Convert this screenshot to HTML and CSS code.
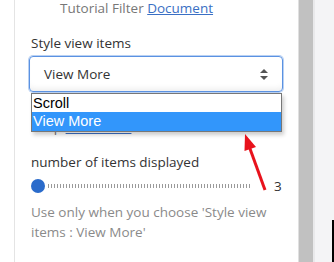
FILE: index.html
```html
<!DOCTYPE html>
<html lang="en">
<head>
  <meta charset="UTF-8" />
  <title>Settings</title>
  <link rel="stylesheet" href="styles.css">
</head>
<body>
  <div class="page">
    <div class="panel">
      <p class="tutorial">Tutorial Filter <a href="#">Document</a></p>

      <label class="label">Style view items</label>
      <div class="select-wrap">
        <div class="select">
          <span>View More</span>
          <svg class="caret" width="8" height="11" viewBox="0 0 8 11">
            <path d="M4 0 L8 4 L0 4 Z M0 7 L8 7 L4 11 Z" fill="#555"/>
          </svg>
        </div>
        <!-- open option list -->
        <ul class="options">
          <li>Scroll</li>
          <li class="active">View More</li>
        </ul>
      </div>

      <p class="shop">shop <a href="#">Document</a></p>

      <label class="label items-label">number of items displayed</label>
      <div class="slider">
        <span class="thumb"></span>
        <span class="track"></span>
        <span class="value">3</span>
      </div>
      <p class="help">Use only when you choose 'Style view items : View More'</p>
    </div>
    <div class="scroll"></div>
    <div class="side"></div>

    <svg class="arrow" width="334" height="262" viewBox="0 0 334 262">
      <line x1="265" y1="190" x2="249" y2="146" stroke="#e8121c" stroke-width="3"/>
      <polygon points="245,134 256,147 244.5,151" fill="#e8121c"/>
    </svg>
  </div>
</body>
</html>
```

FILE: styles.css
```css
* { margin: 0; padding: 0; box-sizing: border-box; }
body {
  background: #fff;
  font-family: "Open Sans", sans-serif;
  font-size: 13.5px;
  color: #333;
}
.page {
  position: relative;
  display: flex;
  height: 262px;
  width: 334px;
  overflow: hidden;
}
.panel {
  margin-left: 14px;
  width: 285px;
  border-left: 1px solid #e4e4e4;
  border-right: 1px solid #e0e0e0;
  padding-left: 16px;
}
.scroll {
  width: 14px;
  background: #c1c1c1;
}
.side {
  flex: 1;
  background: #f4f4f6;
  border-left: 2px solid #e9e9eb;
  border-right: 2px solid #f4f4f6;
  position: relative;
}
.side::after {
  content: "";
  position: absolute;
  right: -2px;
  top: 220px;
  bottom: 0;
  width: 2px;
  background: #000;
}
a { color: #3a6fc4; }

.tutorial {
  line-height: 16px;
  padding-left: 29px;
  color: #777;
}
.label {
  display: block;
  line-height: 20px;
  margin-top: 17px;
}
.select-wrap {
  position: relative;
  margin-top: 3px;
  margin-left: -2px;
  width: 254px;
}
.select {
  height: 36px;
  border: 1px solid #5b92e2;
  border-radius: 4px;
  box-shadow: 0 0 0 1px #b9d1f3, inset 0 -6px 6px -4px #ececec;
  display: flex;
  align-items: center;
  justify-content: space-between;
  padding: 0 14px 0 14px;
}
.caret { display: block; }
.options {
  position: absolute;
  top: 37px;
  left: 2px;
  width: 251px;
  list-style: none;
  background: #fff;
  border: 1px solid #777;
  box-shadow: 2px 3px 4px rgba(0, 0, 0, 0.2);
  font-family: "Liberation Sans", Arial, sans-serif;
  font-size: 14.5px;
  color: #000;
}
.options li {
  line-height: 18px;
  padding-left: 1px;
}
.options li.active {
  background: #3296fb;
  color: #fff;
  line-height: 19px;
}
.shop {
  line-height: 20px;
  margin-top: 25px;
  color: #777;
}
.items-label { margin-top: 15px; }
.slider {
  display: flex;
  align-items: center;
  height: 20px;
  margin-top: 4px;
}
.thumb {
  width: 14px;
  height: 14px;
  border-radius: 50%;
  background: #2a6bcb;
}
.track {
  width: 204px;
  height: 4px;
  margin-left: 3px;
  background: repeating-linear-gradient(90deg, #9a9a9a 0 1px, transparent 1px 3px);
}
.value { margin-left: 22px; }
.help {
  margin-top: 6px;
  line-height: 20px;
  color: #8a8a8a;
  width: 260px;
}
.arrow {
  position: absolute;
  left: 0;
  top: 0;
  pointer-events: none;
}
```
